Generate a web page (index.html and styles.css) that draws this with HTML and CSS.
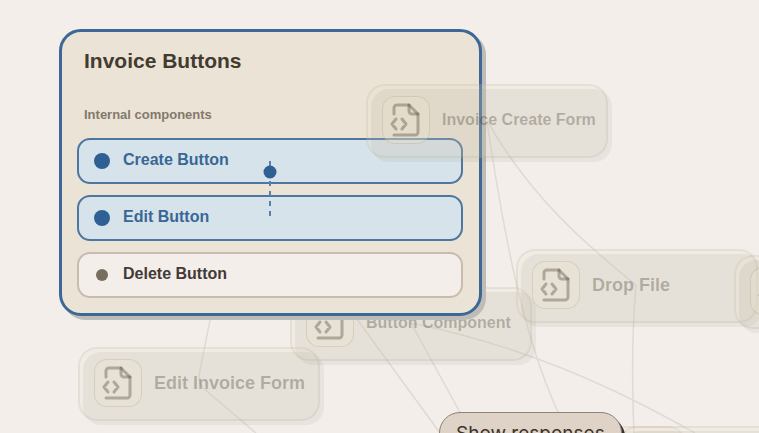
FILE: index.html
```html
<!DOCTYPE html>
<html lang="en">
<head>
    <meta charset="UTF-8">
    <meta name="viewport" content="width=device-width, initial-scale=1.0">
    <title>Invoice Buttons</title>
    <link rel="stylesheet" href="styles.css">
</head>
<body>

    <svg width="0" height="0" class="defs">
        <symbol id="file-code" viewBox="0 0 32 34">
            <path d="M4 11V5a3 3 0 0 1 3-3h12l9 9v18a3 3 0 0 1-3 3H4"/>
            <path d="M19 2v6a3 3 0 0 0 3 3h6"/>
            <path d="M6 16l-4 5 4 5M12 16l4 5-4 5"/>
        </symbol>
    </svg>

    <main class="canvas">
        <svg class="wires">
            <path d="M487 121C500 210 520 330 558 412"/>
            <path d="M487 121C530 195 580 240 636 285"/>
            <path d="M636 285C632 330 632 385 634 433"/>
            <path d="M411 323C520 345 610 385 695 433"/>
            <path d="M411 323L462 416"/>
            <path d="M354 315L440 433"/>
            <path d="M211 315L199 375Q199 384 203 388L256 433"/>
        </svg>

        <div class="node edit-form">
            <span class="node-icon"><svg><use href="#file-code"/></svg></span>
            <span>Edit Invoice Form</span>
        </div>
        <div class="node component">
            <span class="node-icon"><svg><use href="#file-code"/></svg></span>
            <span class="long">Button Component</span>
        </div>
        <div class="node drop-file">
            <span class="node-icon"><svg><use href="#file-code"/></svg></span>
            <span>Drop File</span>
        </div>
        <div class="node side">
            <span class="node-icon"><svg><use href="#file-code"/></svg></span>
        </div>
        <div class="node bottom-left"></div>
        <div class="node bottom-right"></div>

        <section class="card">
            <h2>Invoice Buttons</h2>
            <h3>Internal components</h3>
            <ul>
                <li class="active">Create Button</li>
                <li class="active">Edit Button</li>
                <li>Delete Button</li>
            </ul>
            <svg class="link" viewBox="0 0 14 58">
                <path d="M7 1v56"/>
                <circle cx="7" cy="12" r="6.5"/>
            </svg>
        </section>

        <div class="node create-form">
            <span class="node-icon"><svg><use href="#file-code"/></svg></span>
            <span class="long">Invoice Create Form</span>
        </div>

        <button type="button" class="show">Show responses</button>
    </main>

</body>
</html>
```
FILE: styles.css
```css
* {
    box-sizing: border-box;
}

body {
    margin: 0;
    font-family: "Liberation Sans", Arial, sans-serif;
    background-color: #f3eeea;
}

.defs {
    position: absolute;
}

.canvas {
    position: relative;
    height: 100vh;
    overflow: hidden;
}

.wires {
    position: absolute;
    width: 100%;
    height: 100%;
    fill: none;
    stroke: #dfdad5;
    stroke-width: 1.5;
}

.card {
    position: absolute;
    left: 59px;
    top: 29px;
    width: 423px;
    padding: 17px 16px 15px 15px;
    background-color: #eae3d6;
    border: 3px solid #3b6896;
    border-radius: 22px;
    box-shadow: 4px 4px 0 #bfbbb8;
}

.card h2 {
    margin: 0 7px;
    font-size: 21px;
    line-height: 24px;
    color: #443a2f;
}

.card h3 {
    margin: 32px 7px 13px;
    font-size: 13px;
    line-height: 20px;
    color: #85786b;
}

.card ul {
    display: flex;
    flex-direction: column;
    gap: 11px;
    margin: 0;
    padding: 0;
    list-style: none;
}

.card li {
    display: flex;
    align-items: center;
    height: 46px;
    padding: 0 15px 2px;
    background-color: #f3eeea;
    border: 2px solid #c9bcae;
    border-radius: 13px;
    font-size: 16px;
    font-weight: bold;
    color: #443a35;
}

.card li::before {
    content: "";
    width: 12px;
    height: 12px;
    margin: 2px 15px 0 2px;
    border-radius: 50%;
    background-color: #786d5f;
}

.card li.active {
    background-color: #d7e3ea;
    border-color: #4f769e;
    color: #386796;
}

.card li.active::before {
    width: 16px;
    height: 16px;
    margin: 2px 13px 0 0;
    background-color: #2f6094;
}

.link {
    position: absolute;
    left: 201px;
    top: 128px;
    width: 14px;
    height: 58px;
    fill: #2f6094;
}

.link path {
    stroke: #5a80a8;
    stroke-width: 2;
    stroke-dasharray: 5 5;
}

.node {
    position: absolute;
    isolation: isolate;
    display: flex;
    align-items: center;
    gap: 12px;
    width: 242px;
    height: 74px;
    padding: 0 14px 2px;
    background-color: rgba(240, 226, 204, 0.2);
    border: 2px solid rgba(120, 115, 90, 0.1);
    border-radius: 19px;
    font-size: 18px;
    font-weight: bold;
    white-space: nowrap;
    color: rgba(75, 65, 55, 0.34);
}

.node::before {
    content: "";
    position: absolute;
    z-index: -1;
    left: 3px;
    top: 3px;
    width: 241px;
    height: 73px;
    border-radius: 18px;
    background-color: rgba(130, 135, 122, 0.1);
}

.node .long {
    font-size: 16px;
}

.node-icon {
    display: flex;
    align-items: center;
    justify-content: center;
    flex-shrink: 0;
    width: 48px;
    height: 48px;
    background-color: rgba(235, 230, 205, 0.3);
    border: 1px solid rgba(130, 120, 80, 0.18);
    border-radius: 13px;
}

.node-icon svg {
    width: 32px;
    height: 34px;
    fill: none;
    stroke: rgba(75, 65, 50, 0.36);
    stroke-width: 3;
    stroke-linecap: round;
    stroke-linejoin: round;
}

.create-form {
    left: 366px;
    top: 84px;
}

.drop-file {
    left: 516px;
    top: 249px;
}

.component {
    left: 290px;
    top: 287px;
}

.edit-form {
    left: 78px;
    top: 347px;
}

.side {
    left: 734px;
    top: 255px;
}

.bottom-left {
    left: 445px;
    top: 426px;
}

.bottom-right {
    left: 618px;
    top: 426px;
}

.show {
    position: absolute;
    left: 439px;
    top: 412px;
    padding: 9px 16px;
    background-color: #ded3c6;
    border: 1px solid #8d8378;
    border-radius: 21px;
    box-shadow: 3px 4px 0 #332f2b;
    font-family: Inter, sans-serif;
    font-size: 19px;
    line-height: 24px;
    color: #3b342d;
}
```
